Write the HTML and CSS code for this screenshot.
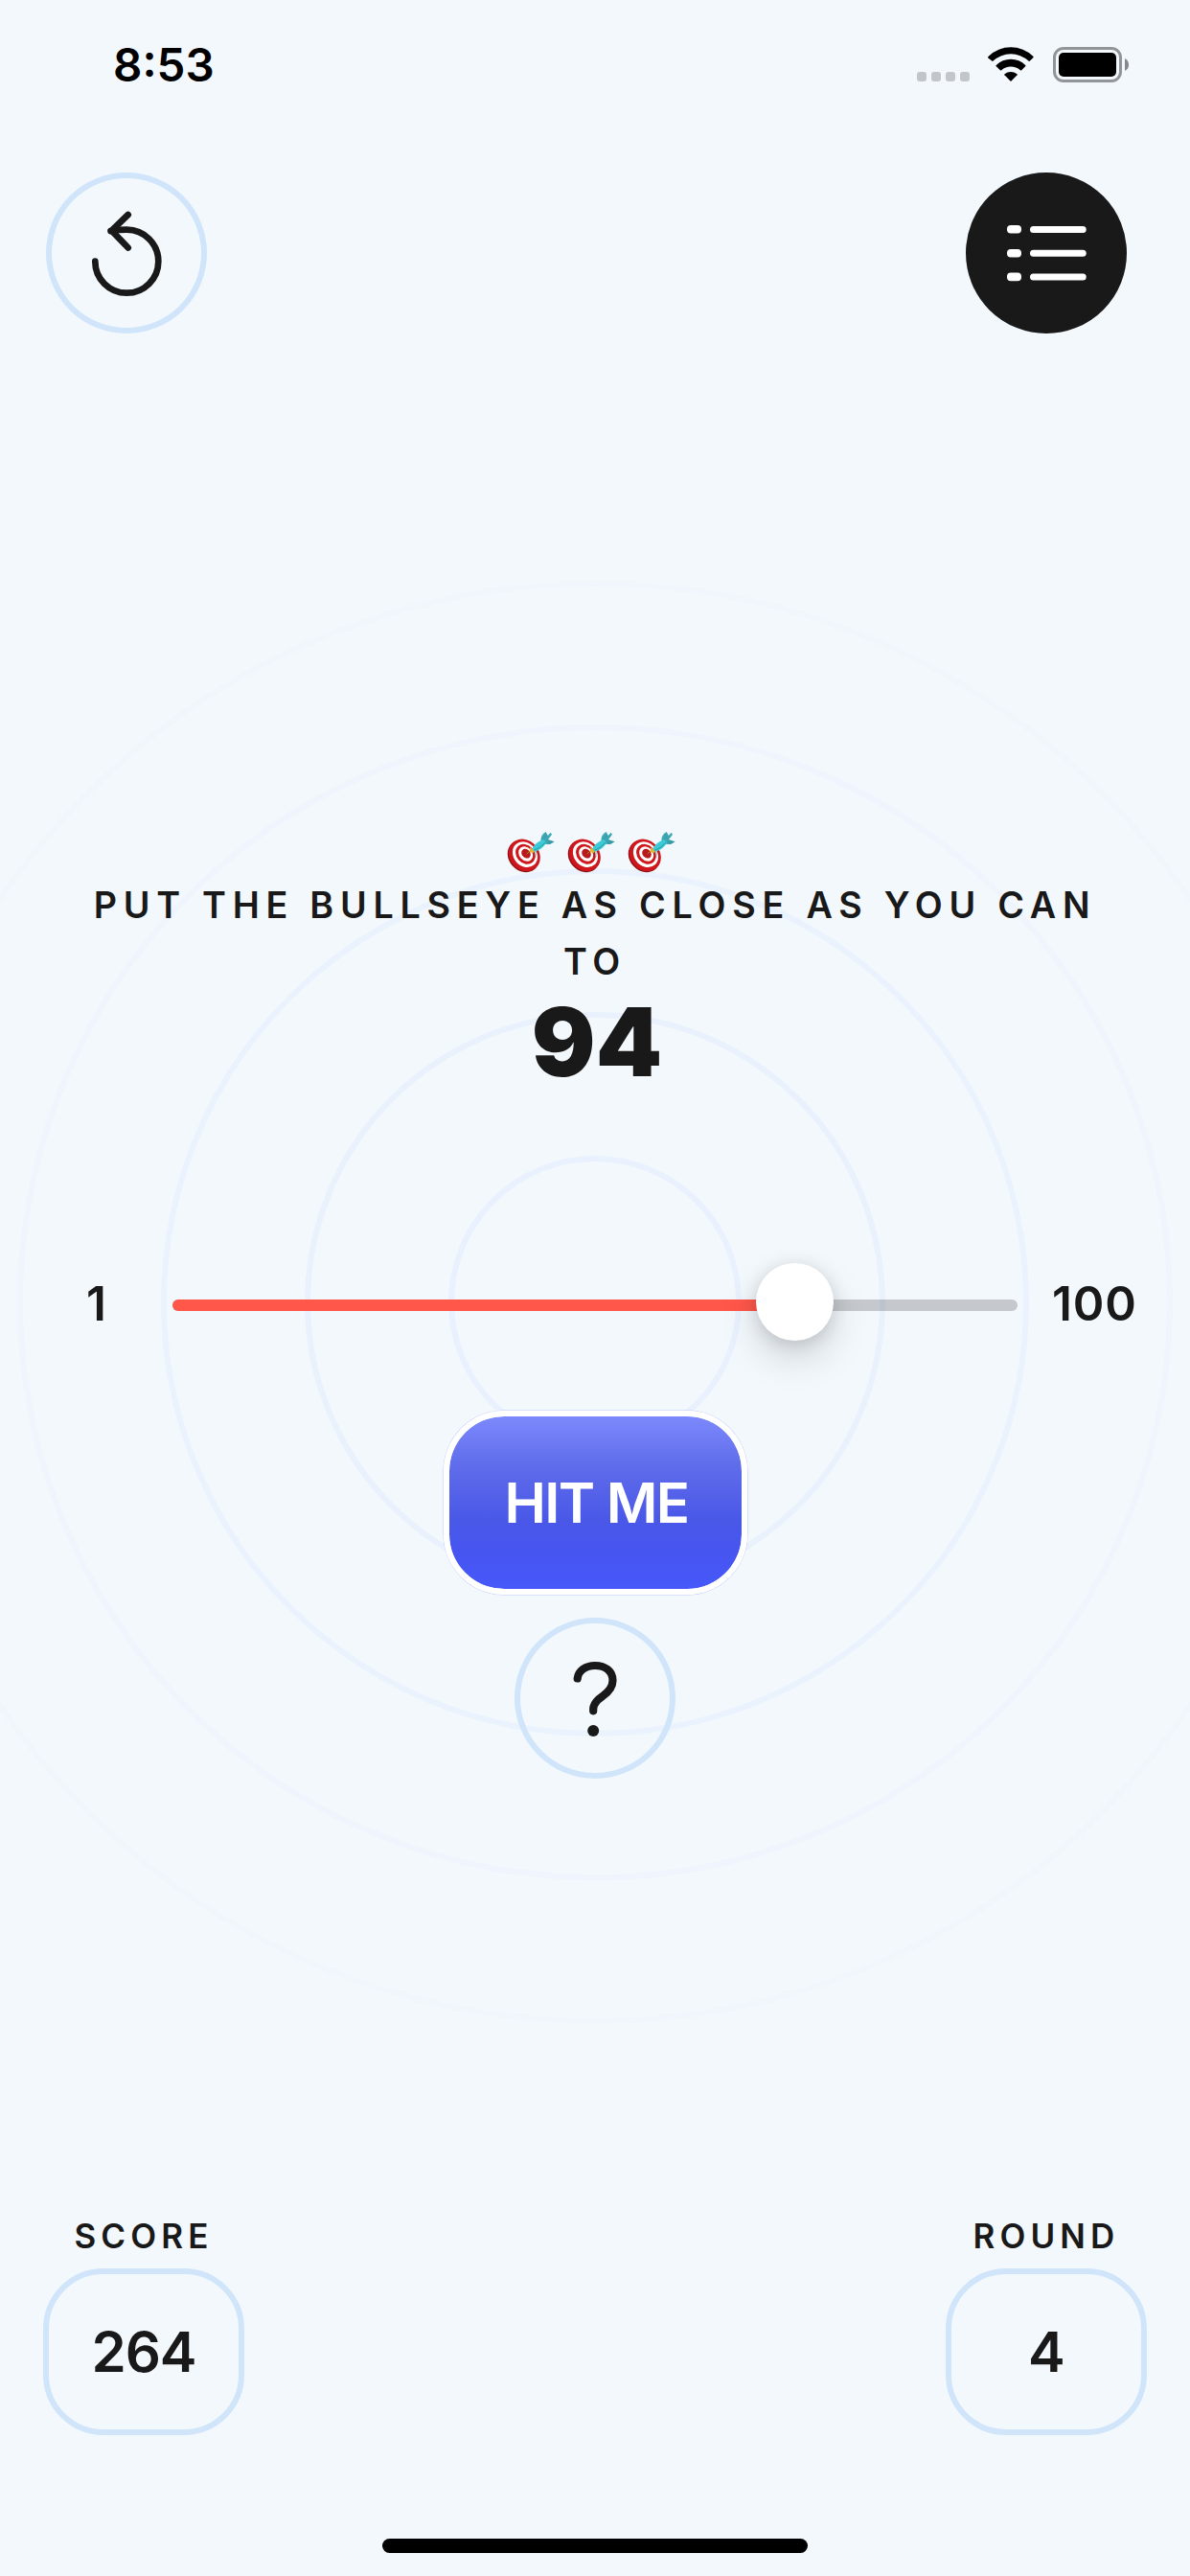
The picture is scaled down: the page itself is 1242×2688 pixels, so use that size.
FILE: index.html
```html
<!DOCTYPE html>
<html lang="en">
<head>
<meta charset="utf-8">
<title>Bullseye</title>
<link rel="stylesheet" href="styles.css">
</head>
<body>
<svg class="defs" width="0" height="0" aria-hidden="true">
  <defs>
    <linearGradient id="fin" x1="0" y1="0" x2="1" y2="1">
      <stop offset="0" stop-color="#45b9c4"/>
      <stop offset="1" stop-color="#2f8f9b"/>
    </linearGradient>
    <symbol id="dartboard" viewBox="48 18 162 138">
      <ellipse cx="109" cy="100" rx="46" ry="54" transform="rotate(-42 109 100)" fill="#8f0f14"/>
      <ellipse cx="112" cy="97" rx="46" ry="53.500" transform="rotate(-42 112 97)" fill="#cf161c"/>
      <ellipse cx="114" cy="95" rx="36" ry="43" transform="rotate(-42 114 95)" fill="#fff"/>
      <ellipse cx="115" cy="94" rx="28" ry="34" transform="rotate(-42 115 94)" fill="#cf161c"/>
      <ellipse cx="116" cy="93" rx="20.500" ry="25" transform="rotate(-42 116 93)" fill="#fff"/>
      <ellipse cx="117" cy="92" rx="13" ry="16" transform="rotate(-42 117 92)" fill="#b91a20"/>
      <path d="M134 83L154 84L147 108Z" fill="#40484c" opacity=".28"/>
      <path d="M119 93L136 78" stroke="#b98a16" stroke-width="3"/>
      <path d="M130 72L144 84L140 90L129 88Z" fill="#e3b52b"/>
      <path d="M163 52Q162 34 179 24L187 39L175 56Z" fill="url(#fin)"/>
      <path d="M171 52L194 26L198 32L186 48L206 55L192 63L176 62Z" fill="url(#fin)"/>
      <path d="M136 77Q143 59 171 48L181 57Q169 79 145 86Z" fill="#3ccbd6"/>
      <path d="M142 82Q160 76 178 57" fill="none" stroke="#279aa6" stroke-width="3"/>
    </symbol>
  </defs>
</svg>

<svg class="rings" width="1242" height="2688" viewBox="0 0 1242 2688" aria-hidden="true">
  <circle class="ring ring-1" cx="621" cy="1359" r="150"/>
  <circle class="ring ring-2" cx="621" cy="1359" r="300"/>
  <circle class="ring ring-3" cx="621" cy="1359" r="450"/>
  <circle class="ring ring-4" cx="621" cy="1359" r="600"/>
  <circle class="ring ring-5" cx="621" cy="1359" r="750"/>
</svg>

<main class="screen">
  <header class="status">
    <span class="time">8:53</span>
    <div class="indicators">
      <div class="signal"><i></i><i></i><i></i><i></i></div>
      <svg class="wifi" width="48" height="37" viewBox="0 0 48 37">
        <path d="M0 11.200Q0 10.500.7 9.800A33.500 33.500 0 0 1 47.300 9.800Q48 10.500 47.300 11.200L43.900 14.600Q43.100 15.300 42.400 14.600A27 27 0 0 0 5.600 14.600Q4.900 15.300 4.200 14.600Z"/>
        <path d="M8.500 20Q8.200 19.500 8.800 19A21.500 21.500 0 0 1 39.200 19Q39.800 19.500 39.400 20L35.200 24.200Q34.600 24.700 33.900 24.200A14.800 14.800 0 0 0 14.200 24.200Q13.500 24.700 12.900 24.200Z"/>
        <path d="M17.400 29.200Q17 28.700 17.500 28.200A10.500 10.500 0 0 1 30.500 28.200Q31 28.700 30.600 29.200L24.500 35.500Q24 36 23.500 35.500Z"/>
      </svg>
      <svg class="battery" width="80" height="38" viewBox="0 0 80 38">
        <rect x="1.500" y="1.500" width="69" height="34" rx="9.500" fill="none" stroke="#929598" stroke-width="3"/>
        <rect x="6" y="6" width="60" height="25" rx="5"/>
        <path d="M75 12Q79 14 79 18.500T75 25Z" fill="#86898c"/>
      </svg>
    </div>
  </header>

  <nav class="toolbar">
    <button class="round-button" aria-label="Start over">
      <svg width="168" height="168" viewBox="0 0 168 168">
        <path class="line" d="M51.300 92.700A33 33 0 1 0 84.300 59.700Q75.500 59.700 67.500 61"/>
        <path class="line" d="M85.700 44L68.500 60.700L85.700 78.500"/>
      </svg>
    </button>
    <button class="round-button filled" aria-label="Leaderboard">
      <svg width="168" height="168" viewBox="0 0 168 168" fill="#fff">
        <rect x="43" y="55" width="15" height="8.600" rx="4"/><rect x="67" y="55.900" width="58.700" height="7" rx="3.500"/>
        <rect x="43" y="80" width="15" height="8.400" rx="4"/><rect x="67" y="80.700" width="58.700" height="7" rx="3.500"/>
        <rect x="43" y="104.600" width="15" height="8.600" rx="4"/><rect x="67" y="105.500" width="58.700" height="7" rx="3.500"/>
      </svg>
    </button>
  </nav>

  <section class="game">
    <div class="bullseyes">
      <svg width="54" height="46"><use href="#dartboard"/></svg>
      <svg width="54" height="46"><use href="#dartboard"/></svg>
      <svg width="54" height="46"><use href="#dartboard"/></svg>
    </div>
    <p class="instructions">PUT THE BULLSEYE AS CLOSE AS YOU CAN<br>TO</p>
    <p class="target">94</p>
    <div class="slider-row">
      <span class="bound low">1</span>
      <div class="track">
        <div class="fill"></div>
        <div class="thumb"></div>
      </div>
      <span class="bound high">100</span>
    </div>
    <button class="hit">HIT ME</button>
    <button class="round-button help" aria-label="Help">
      <svg width="168" height="168" viewBox="0 0 168 168">
        <path class="line thick" d="M65.700 63.500C66.500 55.500 74 50 84 50C95 50 102.500 56 102.500 65.500C102.500 73 98.500 77.300 92 81.800C85 86.500 82.200 90.500 82.200 95.500V97.300"/>
        <circle cx="82.200" cy="118" r="6" fill="#191919"/>
      </svg>
    </button>
  </section>

  <footer class="stats">
    <div class="stat"><span class="label">SCORE</span><div class="value">264</div></div>
    <div class="stat"><span class="label">ROUND</span><div class="value">4</div></div>
  </footer>
  <div class="home"></div>
</main>
</body>
</html>
```
FILE: styles.css
```css
* { box-sizing: border-box; }

body {
  margin: 0;
  width: 1242px;
  height: 2688px;
  overflow: hidden;
  background: #f3f8fd;
  color: #191919;
  font-family: Inter, "Liberation Sans", sans-serif;
}

p { margin: 0; }
svg { display: block; }
.defs { position: absolute; }

button {
  padding: 0;
  font-family: inherit;
  background: none;
  border: 0;
}

/* Concentric rings behind the whole screen */
.rings { position: absolute; top: 0; left: 0; }
.ring { fill: none; stroke-width: 6; }
.ring-1 { stroke: #e8f1fd; }
.ring-2 { stroke: #e9f1fd; }
.ring-3 { stroke: #eaf3fd; }
.ring-4 { stroke: #eff4fd; }
.ring-5 { stroke: #f1f6fc; }

.screen {
  position: relative;
  display: flex;
  flex-direction: column;
  height: 2688px;
}

.status {
  display: flex;
  justify-content: space-between;
  height: 132px;
  padding: 0 63px 0 118px;
  color: #000;
}
.time {
  margin-top: 38px;
  font-size: 47.500px;
  line-height: 60px;
  font-weight: 600;
}
.indicators { display: flex; align-items: flex-start; margin-top: 49px; }
.signal { display: flex; gap: 5px; margin: 26px 19px 0 0; }
.signal i { width: 10px; height: 10px; border-radius: 3px; background: #c2c5ca; }
.battery { margin-left: 20px; }

.toolbar {
  display: flex;
  justify-content: space-between;
  margin-top: 48px;
  padding: 0 66px 0 48px;
}
.round-button {
  display: flex;
  align-items: center;
  justify-content: center;
  width: 168px;
  height: 168px;
  border: 6px solid #d0e5fa;
  border-radius: 50%;
}
.round-button svg { flex: none; }
.round-button.filled { background: #191919; border-color: #191919; }
.line {
  fill: none;
  stroke: #191919;
  stroke-width: 6.700;
  stroke-linecap: round;
  stroke-linejoin: round;
}
.line.thick { stroke-width: 8.200; }

.game {
  display: flex;
  flex-direction: column;
  align-items: center;
  margin-top: 518px;
}
.bullseyes { display: flex; gap: 9px; margin-right: 10px; }
.instructions {
  margin-top: 3px;
  font-size: 37.700px;
  line-height: 59px;
  font-weight: 600;
  letter-spacing: 6.750px;
  text-align: center;
  white-space: nowrap;
}
.target {
  padding-left: 4px;
  font-size: 99px;
  line-height: 108px;
  font-weight: 900;
}

.slider-row {
  display: flex;
  align-items: center;
  width: 1242px;
  height: 84px;
  margin-top: 176px;
}
.bound {
  margin-top: 2px;
  font-size: 49.500px;
  line-height: 60px;
  font-weight: 600;
}
.low { width: 180px; padding-left: 90px; }
.high { padding-left: 36px; letter-spacing: .8px; }
.track {
  position: relative;
  width: 882px;
  height: 12px;
  margin-top: 6px;
  border-radius: 6px;
  background: rgba(60, 60, 67, .25);
}
.fill { width: 649px; height: 12px; border-radius: 6px; background: #ff574a; }
.thumb {
  position: absolute;
  left: 609px;
  top: -38px;
  width: 81px;
  height: 81px;
  border-radius: 50%;
  background: #fff;
  box-shadow: 0 18px 39px rgba(0, 0, 0, .15), 0 3px 18px rgba(0, 0, 0, .13);
}

.hit {
  width: 317px;
  height: 192px;
  margin-top: 71px;
  padding-left: 3px;
  border: 6px solid #fff;
  border-radius: 63px;
  background: linear-gradient(#7c89fc 0%, #5e6bea 30%, #4a58e8 60%, #4655f0 80%, #4759fb 100%) padding-box;
  box-shadow: 0 0 0 .5px rgba(71, 89, 251, .3);
  color: #fff;
  font-size: 58.200px;
  line-height: 70px;
  font-weight: 600;
  letter-spacing: -1.600px;
}
.help { margin-top: 24px; }

.stats {
  display: flex;
  justify-content: space-between;
  margin-top: 455px;
  padding: 0 45px;
}
.stat {
  display: flex;
  flex-direction: column;
  align-items: center;
  gap: 12px;
}
.label {
  font-size: 35px;
  line-height: 44px;
  font-weight: 600;
  letter-spacing: 5.100px;
}
.value {
  display: flex;
  align-items: center;
  justify-content: center;
  width: 210px;
  height: 174px;
  border: 6px solid #d0e5fa;
  border-radius: 63px;
  font-size: 58.200px;
  font-weight: 600;
  letter-spacing: -1px;
}
.home {
  align-self: center;
  width: 444px;
  height: 15px;
  margin-top: 108px;
  border-radius: 8px;
  background: #000;
}
```
